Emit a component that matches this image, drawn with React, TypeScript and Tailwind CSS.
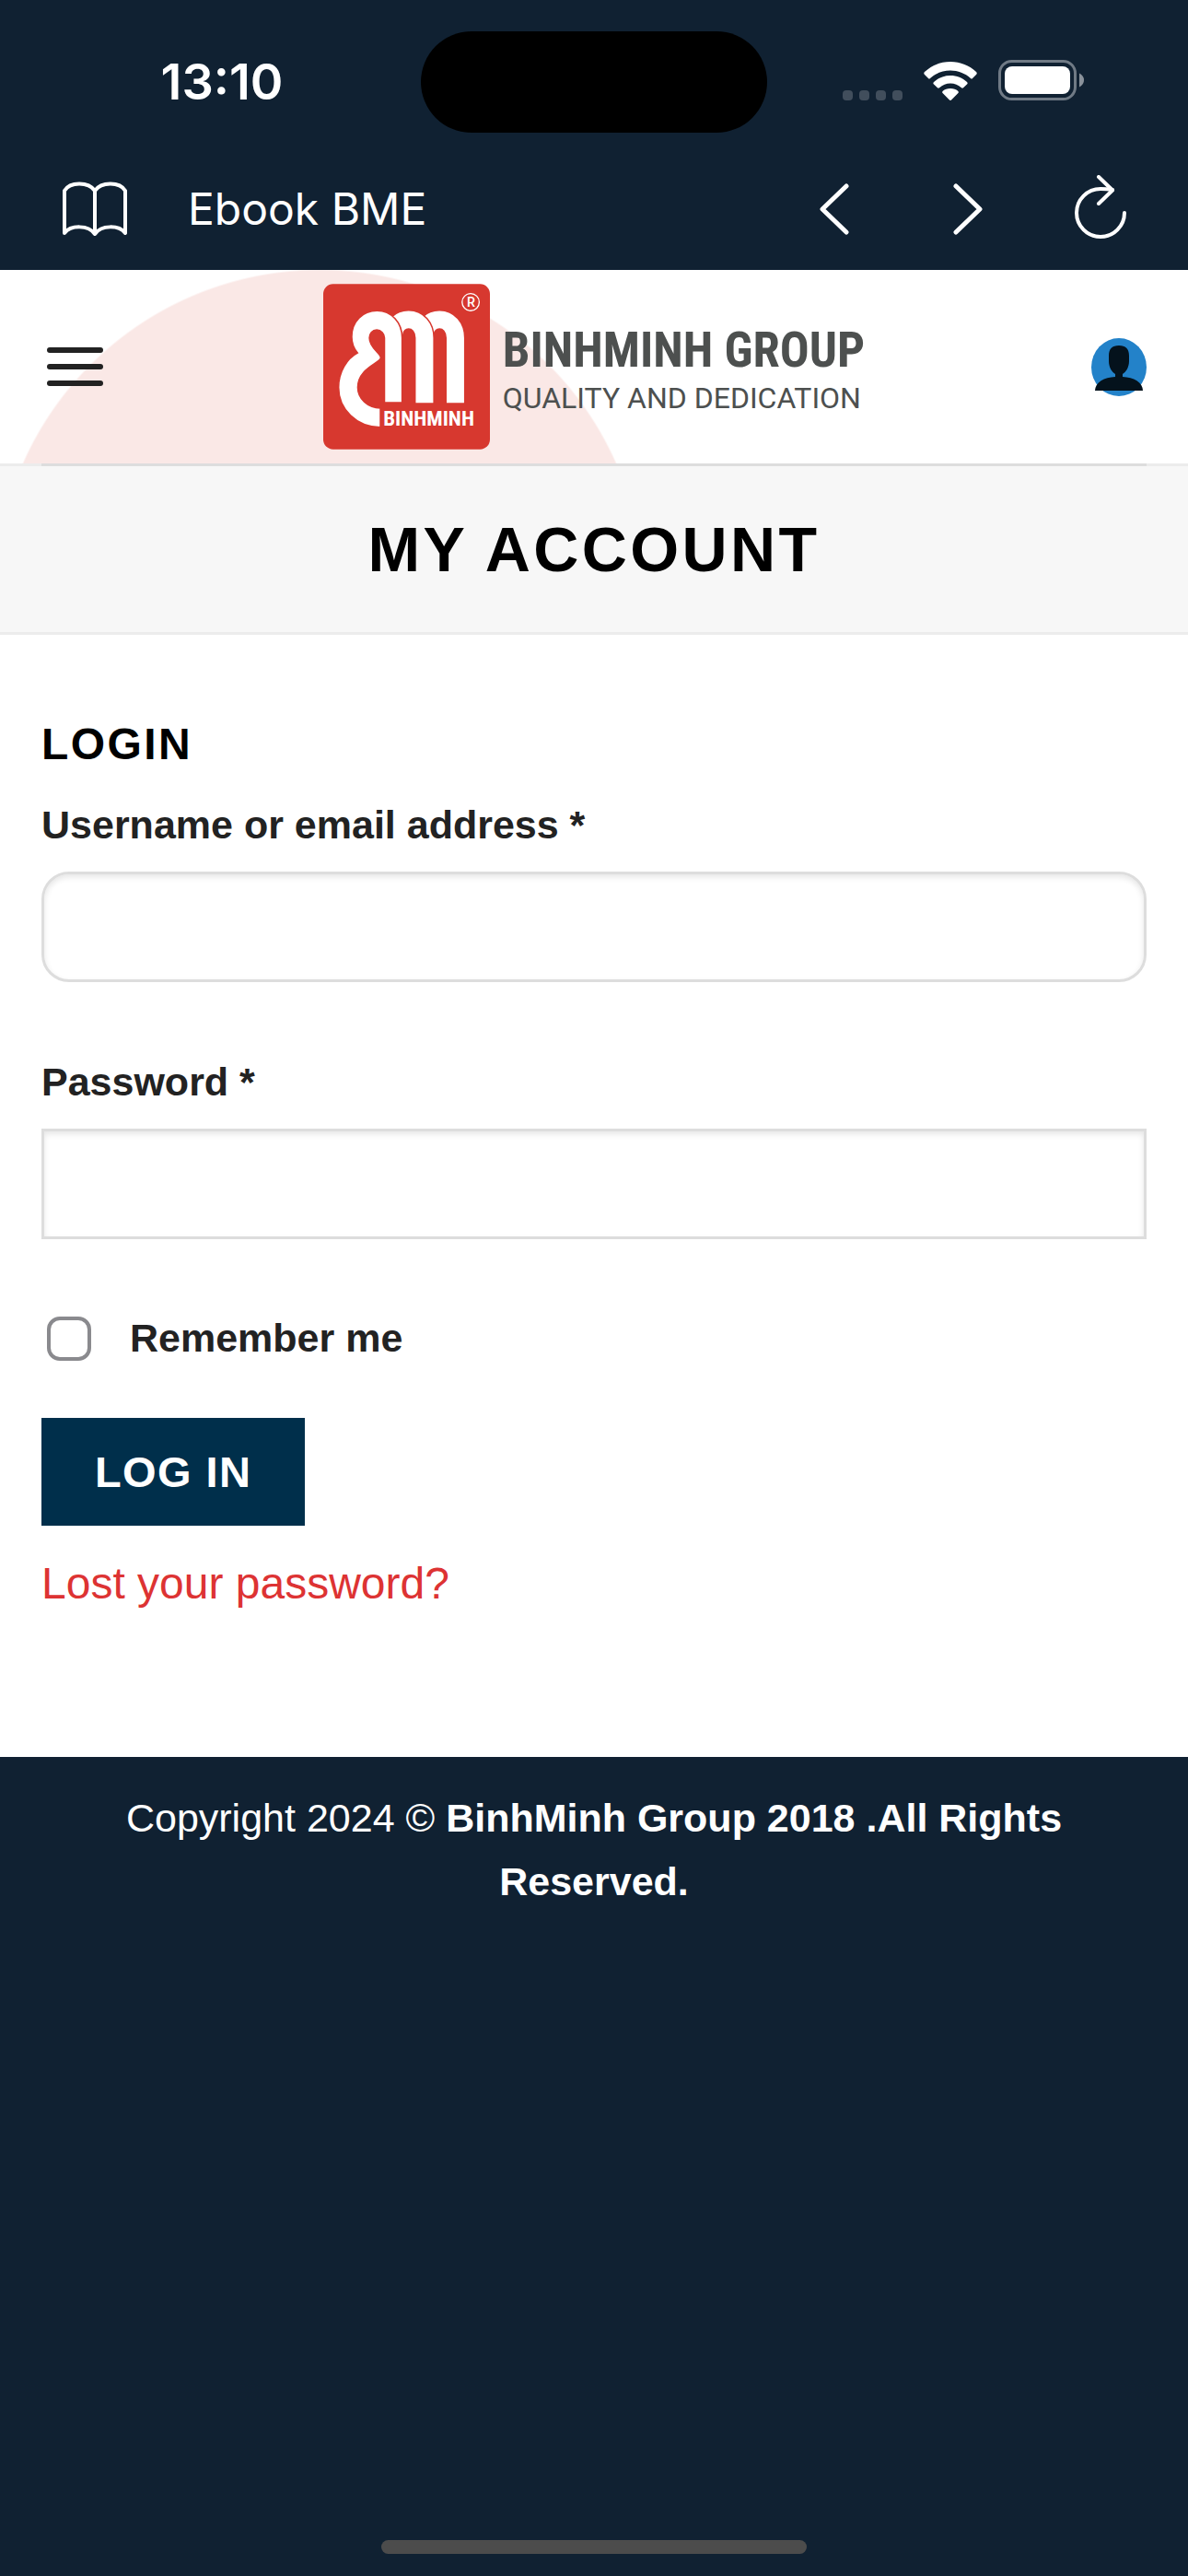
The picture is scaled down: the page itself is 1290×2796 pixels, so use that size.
import React, { useState } from 'react'

interface FieldProps {
  id: string
  label: string
  type: string
  value: string
  inputClassName: string
  onChange: (value: string) => void
}

const BookIcon = () => (
  <svg width="72" height="60" viewBox="0 0 72 60" fill="none" stroke="currentColor" strokeWidth="4" strokeLinejoin="round" strokeLinecap="round">
    <path d="M36 10C29 0 9 0 3 10V56C10 47 29 47 36 57C43 47 62 47 69 56V10C63 0 43 0 36 10V57" />
  </svg>
)

const ReloadIcon = () => (
  <svg width="58" height="74" viewBox="0 0 58 74" fill="none" stroke="currentColor" strokeWidth="4" strokeLinecap="round" strokeLinejoin="round">
    <path d="M55 41A26 26 0 1 1 29 15Q36 15 42 16" />
    <path d="M27 2L42 16.500L27 31" />
  </svg>
)

const WifiIcon = () => (
  <svg width="58" height="42" viewBox="0 0 58 42" fill="currentColor">
    <path d="M29 0C40 0 49.500 4 57 11Q58.500 12.500 57 14L53 18Q52 19 51 18C45 12.500 37 9.500 29 9.500S13 12.500 7 18Q6 19 5 18L1 14Q-.5 12.500 1 11C8.500 4 18 0 29 0Z" />
    <path d="M29 15C36 15 42 17.500 47 22Q48.300 23.300 47 24.600L43 28.300Q42 29 41 28.300C37.500 25 33.500 23.500 29 23.500S20.500 25 17 28.300Q16 29 15 28.300L11 24.600Q9.700 23.300 11 22C16 17.500 22 15 29 15Z" />
    <path d="M29 29C32.500 29 35 30 37.200 31.700Q38.500 33 37.200 34.300L30.300 41.300Q29 42.500 27.700 41.300L20.800 34.300Q19.500 33 20.800 31.700C23 30 25.500 29 29 29Z" />
  </svg>
)

const BatteryIcon = () => (
  <svg width="94" height="44" viewBox="0 0 94 44">
    <rect x="1.500" y="1.500" width="82" height="41" rx="13" fill="none" stroke="#707a85" strokeWidth="3" />
    <rect x="7" y="7" width="71" height="30" rx="8" fill="#fff" />
    <path d="M88 14.500Q93 17 93 22T88 29.500Z" fill="#8a929b" />
  </svg>
)

const LogoMark = () => (
  <svg width="181" height="180" viewBox="0 0 545 540">
    <rect width="545" height="540" rx="32" fill="#d7382f" />
    <g fill="none" stroke="#fff" strokeWidth="57">
      <path d="M432 388V176C432 141 410 116 380 116C352 116 336 134 332 160" />
      <path d="M331 388V176C331 141 309 116 279 116C251 116 235 134 231 160" stroke="#d7382f" strokeWidth="66" />
      <path d="M331 388V176C331 141 309 116 279 116C251 116 235 134 231 160" />
    </g>
    {/* Left loop of the monogram, kept apart by a thin red edge */}
    <path
      d="M187 468C108 468 50 408 50 338C50 286 78 243 112 225C98 208 93 192 93 172C93 122 129 87 176 87C223 87 258 126 258 176V388H200V176C200 162 189 150 175 150C160 150 151 162 151 176C151 210 188 224 188 241C188 258 113 275 113 338C113 374 145 405 187 405Z"
      fill="#fff"
      stroke="#d7382f"
      strokeWidth="5"
    />
    <text x="345" y="464" textAnchor="middle" fill="#fff" fontSize="69" fontWeight="700" fontFamily="'Roboto Condensed', 'Liberation Sans Narrow', sans-serif">
      BINHMINH
    </text>
    <circle cx="482" cy="59" r="28" fill="none" stroke="#fff" strokeWidth="4" />
    <text x="483" y="74" textAnchor="middle" fill="#fff" fontSize="43" fontWeight="500" fontFamily="Roboto, sans-serif">
      R
    </text>
  </svg>
)

const AvatarIcon = () => (
  <svg width="60" height="63" viewBox="0 0 180 189">
    <ellipse cx="90" cy="94.500" rx="90" ry="94.500" fill="#2382c9" />
    <path
      d="M90 24C112 24 123 34 123 58V75C123 96 112 111 102 117V126C138 127 168 145 168 171H12C12 145 42 127 78 126V117C68 111 57 96 57 75V58C57 34 68 24 90 24Z"
      fill="#04121c"
    />
  </svg>
)

const Field: React.FC<FieldProps> = ({ id, label, type, value, inputClassName, onChange }) => (
  <div className="flex flex-col">
    <label htmlFor={id} className="mb-4 text-[43px] leading-[69px] font-bold">
      {label}
    </label>
    <input
      id={id}
      type={type}
      value={value}
      onChange={(e) => onChange(e.target.value)}
      className={`h-[120px] w-full border-3 border-[#ddd] bg-white px-9 text-[48px] shadow-[inset_0_3px_6px_rgba(0,0,0,0.1)] outline-none ${inputClassName}`}
    />
  </div>
)

export default function App() {
  const [username, setUsername] = useState('')
  const [password, setPassword] = useState('')
  const [remember, setRemember] = useState(false)

  return (
    <div className="flex min-h-screen flex-col bg-[#102132] font-['Liberation_Sans',Arial,sans-serif] text-[#222]">
      {/* Status bar */}
      <div className="grid grid-cols-[1fr_376px_1fr] items-center pt-[34px] text-white">
        <div className="pl-[25px] text-center font-[Inter,sans-serif] text-[54px] leading-[64px] font-semibold">13:10</div>
        <div className="h-[110px] rounded-full bg-black" />
        <div className="flex items-end justify-end gap-[23px] pr-[112px] pb-1">
          <div className="flex gap-[7px]">
            {[0, 1, 2, 3].map((dot) => (
              <span key={dot} className="size-[11px] rounded-[4px] bg-[#414e5c]" />
            ))}
          </div>
          <WifiIcon />
          <BatteryIcon />
        </div>
      </div>

      {/* Browser toolbar */}
      <div className="flex h-[149px] items-center pt-4 pr-[66px] pl-[67px] text-white">
        <button type="button" aria-label="Library">
          <BookIcon />
        </button>
        <span className="ml-[65px] font-[Inter,sans-serif] text-[48px] leading-[64px]">Ebook BME</span>
        <div className="ml-auto flex items-center">
          <button type="button" aria-label="Back">
            <svg width="32" height="56" viewBox="0 0 32 56" fill="none" stroke="currentColor" strokeWidth="5" strokeLinecap="round" strokeLinejoin="round">
              <path d="M29 3L3 28L29 53" />
            </svg>
          </button>
          <button type="button" aria-label="Forward" className="ml-[113px]">
            <svg width="32" height="56" viewBox="0 0 32 56" fill="none" stroke="currentColor" strokeWidth="5" strokeLinecap="round" strokeLinejoin="round">
              <path d="M3 3L29 28L3 53" />
            </svg>
          </button>
          <button type="button" aria-label="Reload" className="ml-[99px]">
            <ReloadIcon />
          </button>
        </div>
      </div>

      {/* Site header */}
      <header className="bg-white bg-[radial-gradient(circle_at_347px_352px,#fae8e6_351px,transparent_353px)]">
        <div className="flex h-[210px] items-center justify-between px-[45px]">
          <button type="button" aria-label="Menu" className="flex w-[73px] flex-col gap-3 pl-[6px]">
            <span className="h-[6px] w-[61px] rounded-full bg-[#222]" />
            <span className="h-[6px] w-[61px] rounded-full bg-[#222]" />
            <span className="h-[6px] w-[61px] rounded-full bg-[#222]" />
          </button>
          <a href="#home" className="flex items-center gap-[14px] text-[#4d504f]">
            <LogoMark />
            <span className="flex flex-col gap-1 pt-2">
              <span className="font-['Roboto_Condensed','Liberation_Sans_Narrow',sans-serif] text-[53px] leading-[56px] font-bold">BINHMINH GROUP</span>
              <span className="font-[Roboto,sans-serif] text-[32px] leading-[40px]">QUALITY AND DEDICATION</span>
            </span>
          </a>
          <a href="#account" aria-label="Account" className="flex w-[73px] justify-end">
            <AvatarIcon />
          </a>
        </div>
      </header>

      <div className="border-b-3 border-[#ececec] bg-[#f7f7f7]">
        <div className="bg-[#ececec] px-[45px]">
          <div className="h-[3px] bg-[#ddd]" />
        </div>
        <h1 className="py-[46px] text-center text-[68px] leading-[88px] font-bold tracking-wider text-black">MY ACCOUNT</h1>
      </div>

      {/* Login form */}
      <main className="bg-white px-[45px] pt-[88px] pb-[150px]">
        <h2 className="text-[48px] leading-[62px] font-bold tracking-wider text-black">LOGIN</h2>
        <form className="flex flex-col items-stretch pt-[22px]" onSubmit={(e) => e.preventDefault()}>
          <div className="flex flex-col gap-[74px]">
            <Field id="username" label="Username or email address *" type="text" value={username} onChange={setUsername} inputClassName="rounded-[30px]" />
            <Field id="password" label="Password *" type="password" value={password} onChange={setPassword} inputClassName="rounded-none" />
          </div>
          <label className="mt-[73px] flex items-center pl-[6px] text-[43px] leading-[69px] font-bold">
            <input
              type="checkbox"
              checked={remember}
              onChange={(e) => setRemember(e.target.checked)}
              className="mr-[42px] size-12 appearance-none rounded-[14px] border-4 border-[#8a8a8e] bg-white checked:bg-[#8a8a8e]"
            />
            Remember me
          </label>
          <button type="submit" className="mt-[52px] self-start bg-[#002f4b] px-[58px] text-[47px] leading-[117px] font-bold tracking-[0.03em] text-white">
            LOG IN
          </button>
        </form>
        <a href="#lost-password" className="mt-6 block text-[48px] leading-[77px] text-[#dd3333]">
          Lost your password?
        </a>
      </main>

      <footer className="px-[45px] pt-8 text-center text-[43px] leading-[69px] text-white">
        Copyright 2024 © <strong>BinhMinh Group 2018 .All Rights Reserved.</strong>
      </footer>

      {/* Home indicator */}
      <div className="mt-auto mb-6 h-[15px] w-[462px] self-center rounded-full bg-[#4c4c4c]" />
    </div>
  )
}
